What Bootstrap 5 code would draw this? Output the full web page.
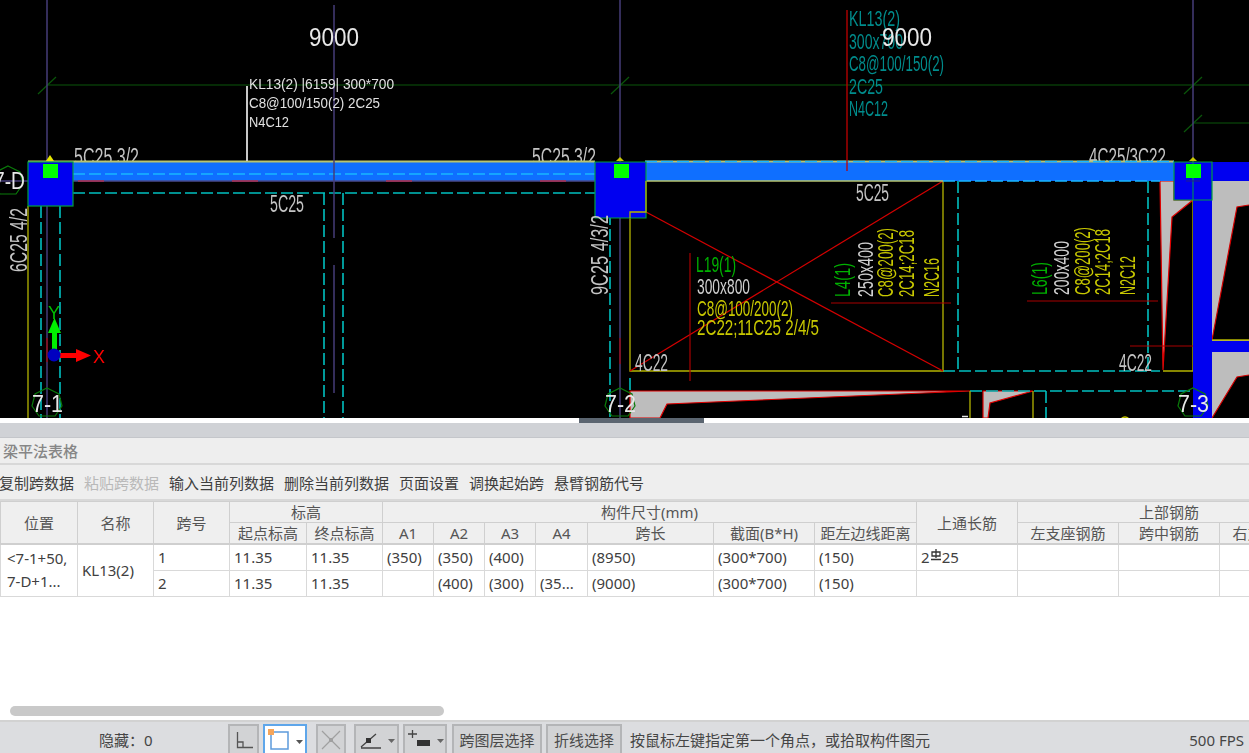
<!DOCTYPE html>
<html lang="zh-CN">
<head>
  <meta charset="UTF-8">
  <meta name="viewport" content="width=device-width, initial-scale=1.0">
  <title>梁平法表格</title>
  <link rel="stylesheet" href="https://cdn.jsdelivr.net/npm/bootstrap@5.3.0/dist/css/bootstrap.min.css">
  <style>
    html, body { height: 100%; }
    body {
      width: 1249px;
      height: 753px;
      overflow: hidden;
      background: #fff;
      color: #3f3f3f;
      font-family: "Noto Sans", "Noto Sans CJK SC", sans-serif;
      font-size: 15px;
    }
    /* drawing area */
    .cad-view { display: block; width: 1249px; height: 418px; background: #000; flex: none; filter: blur(0.4px); }
    .cad-view text { font-family: "Liberation Sans", sans-serif; }
    .cad-view line, .cad-view polyline { fill: none; }
    .grid-line { stroke: #463c78; stroke-width: 1.5; }
    .dim-line { stroke: #0a560a; stroke-width: 1.2; }
    .dash-teal { stroke: #00c0c0; stroke-width: 1.6; stroke-dasharray: 12 4; }
    .dash-sky { stroke: #19b8ff; stroke-width: 1.6; stroke-dasharray: 12 4; }
    .edge-yellow { stroke: #b4b400; stroke-width: 1.3; }
    .edge-red { stroke: #d40000; stroke-width: 1.2; }
    .leader-red { stroke: #a80000; stroke-width: 1.2; }
    .t-gray { fill: #c4c4c4; font-size: 23px; }
    .t-light { fill: #d0d0d0; font-size: 22px; }
    .t-white { fill: #e0e0e0; font-size: 14px; }
    .t-yellow { fill: #c8c800; font-size: 22px; }
    .t-green { fill: #00b000; font-size: 22px; }
    .t-teal { fill: #008c8c; font-size: 22px; }
    .t-num { fill: #e8e8e8; font-size: 25px; }
    .t-axis { fill: #e8e8e8; font-size: 23px; }
    .column-fill { fill: #0000f0; }
    .gray-fill { fill: #bdbdbd; stroke: #e00000; stroke-width: 1.2; }
    .hex { fill: none; stroke: #0a7a0a; stroke-width: 1.2; }

    /* splitter */
    .split-bar { height: 5px; background: #fff; flex: none; }
    .split-grip { width: 125px; height: 5px; margin-left: 579px; background: #5b6570; }
    .panel-head { height: 15px; background: #d0d2d6; border-bottom: 1px solid #c4c6ca; flex: none; }

    /* beam table panel */
    .panel-title {
      height: 27px;
      padding-left: 3px;
      background: #eee;
      border-bottom: 2px solid #d8d8d8;
      color: #868686;
      font-weight: 500;
      line-height: 26px;
      flex: none;
    }
    .tool-row {
      height: 36px;
      background: #eee;
      border-bottom: 2px solid #d8d8d8;
      gap: 10px;
      margin: 0;
      line-height: 36px;
      flex: none;
    }
    .tool-row span { white-space: nowrap; }
    .tool-off { color: #b9b9b9; }
    .grid-wrap { flex: 1 1 auto; overflow: hidden; position: relative; background: #fff; }
    .beam-grid {
      width: 1320px;
      max-width: none;
      table-layout: fixed;
      margin: 0;
      color: #3f3f3f;
      font-size: 15px;
      border-collapse: collapse;
    }
    .beam-grid th, .beam-grid td {
      padding: 0 4px;
      border: 1px solid #d9d9d9;
      white-space: nowrap;
      overflow: hidden;
      box-shadow: none;
      vertical-align: middle;
    }
    .beam-grid th {
      height: 21px;
      padding: 0;
      background: #efefef;
      font-weight: 400;
      text-align: center;
      color: #555;
      border-color: #cfcfcf;
      line-height: 20px;
    }
    .beam-grid td { height: 26px; line-height: 22px; background: #fff; color: #404040; }
    .beam-grid tbody { border-top: 2px solid #cfcfcf; }
    .beam-grid .pos-cell { white-space: normal; line-height: 23px; padding: 0 0 0 6px; }
    .rebar-sign { display: inline-block; width: 12px; height: 12px; vertical-align: 2px; }
    .grid-scroll {
      position: absolute;
      left: 10px;
      bottom: 4px;
      width: 434px;
      height: 10px;
      border-radius: 5px;
      background: #c9c9c9;
    }

    /* bottom status bar */
    .status-bar {
      height: 33px;
      background: #dcdde0;
      border-top: 2px solid #d2d2d2;
      padding-top: 2px;
      flex: none;
      color: #454545;
    }
    .hide-count { width: 228px; padding-left: 99px; line-height: 32px; flex: none; }
    .bar-btn {
      height: 29px;
      padding: 0;
      border: 2px solid #b4b5b7;
      border-bottom: 0;
      border-radius: 0;
      background: #d2d3d5;
      color: #4a4a4a;
      font-size: 15px;
      line-height: 30px;
      display: flex;
      align-items: center;
      justify-content: center;
      flex: none;
    }
    .bar-btn svg { display: block; }
    .bar-on { background: #fff; border-color: #5ea6ea; }
    .w-31 { width: 31px; margin-right: 4px; }
    .w-44 { width: 44px; margin-right: 9px; }
    .w-30 { width: 30px; margin-right: 8px; }
    .w-45 { width: 45px; margin-right: 4px; }
    .w-44b { width: 44px; margin-right: 5px; }
    .w-90 { width: 90px; margin-right: 4px; }
    .w-76 { width: 76px; margin-right: 8px; }
    .status-msg { line-height: 32px; white-space: nowrap; }
    .fps-box { line-height: 33px; padding-right: 5px; white-space: nowrap; }
  </style>
</head>
<body class="d-flex flex-column">

<!-- CAD drawing -->
<svg class="cad-view" viewBox="0 0 1249 418" xmlns="http://www.w3.org/2000/svg">
  <defs>
    <polygon id="bubble" class="hex" points="0,-15 12,-9 15,3 8,13 -8,13 -15,3 -12,-9"/>
  </defs>

  <!-- dimension lines -->
  <line class="dim-line" x1="47" y1="85" x2="1249" y2="85"/>
  <line class="dim-line" x1="1193" y1="123" x2="1249" y2="123"/>
  <line class="dim-line" x1="38" y1="94" x2="56" y2="77"/>
  <line class="dim-line" x1="611" y1="94" x2="629" y2="77"/>
  <line class="dim-line" x1="1184" y1="94" x2="1202" y2="77"/>
  <line class="dim-line" x1="1184" y1="132" x2="1202" y2="115"/>

  <!-- grey wedges -->
  <polygon class="gray-fill" points="630,391 970,391 667,404 660,418 630,418"/>
  <polygon class="gray-fill" points="983,391 1033,391 990,403 988,418 983,418"/>
  <polygon class="gray-fill" points="1160,181 1174,181 1174,200 1193,200 1172,217 1163,370"/>
  <rect x="1212" y="181" width="37" height="237" fill="#bdbdbd"/>
  <polygon points="1212,340 1237,207 1249,205 1249,340" fill="#000"/>
  <polyline class="edge-red" points="1212,340 1237,207 1249,205"/>
  <polygon points="1212,418 1237,377 1249,375 1249,418" fill="#000"/>
  <polyline class="edge-red" points="1212,418 1237,377 1249,375"/>

  <!-- grid axes, the columns are drawn over them -->
  <line class="grid-line" x1="47" y1="0" x2="47" y2="418"/>
  <line class="grid-line" x1="620" y1="0" x2="620" y2="418"/>
  <line class="grid-line" x1="1193" y1="0" x2="1193" y2="162"/>
  <line class="grid-line" x1="0" y1="181" x2="28" y2="181"/>

  <!-- dashed beam and column outlines -->
  <line class="dash-teal" x1="41" y1="206" x2="41" y2="418"/>
  <line class="dash-teal" x1="60" y1="206" x2="60" y2="418"/>
  <line class="dash-teal" x1="324" y1="193" x2="324" y2="418"/>
  <line class="dash-teal" x1="343" y1="193" x2="343" y2="418"/>
  <line class="dash-teal" x1="73" y1="193" x2="595" y2="193"/>
  <line class="dash-teal" x1="610" y1="213" x2="610" y2="418"/>
  <line class="dash-teal" x1="630" y1="378" x2="630" y2="392"/>
  <line class="dash-teal" x1="958" y1="181" x2="958" y2="371"/>
  <line class="dash-teal" x1="1148" y1="181" x2="1148" y2="371"/>
  <line class="dash-teal" x1="943" y1="371" x2="1160" y2="371"/>
  <line class="dash-teal" x1="970" y1="391" x2="1190" y2="391"/>
  <line class="dash-teal" x1="1046" y1="391" x2="1046" y2="418"/>

  <!-- yellow outlines -->
  <line class="edge-yellow" x1="28" y1="206" x2="28" y2="418"/>
  <polyline class="edge-yellow" points="646,212 630,212 630,371 943,371 943,181"/>
  <polyline class="edge-yellow" points="1163,371 1193,371 1193,200"/>
  <line class="edge-yellow" x1="970" y1="391" x2="970" y2="418"/>
  <line class="edge-yellow" x1="1033" y1="391" x2="1033" y2="418"/>
  <line class="edge-yellow" x1="1212" y1="340" x2="1249" y2="340"/>
  <circle cx="1125" cy="422" r="5" fill="none" stroke="#c8c800" stroke-width="1.300"/>
  <line x1="962" y1="416.500" x2="968" y2="416.500" stroke="#e8e8e8" stroke-width="1.500"/>

  <!-- red lines -->
  <line class="edge-red" x1="630" y1="371" x2="943" y2="181"/>
  <line class="edge-red" x1="646" y1="212" x2="943" y2="371"/>
  <line class="leader-red" x1="690" y1="253" x2="690" y2="381"/>
  <line class="leader-red" x1="831" y1="303" x2="951" y2="303"/>
  <line class="leader-red" x1="1027" y1="301" x2="1158" y2="301"/>
  <line class="leader-red" x1="1130" y1="346" x2="1193" y2="346"/>
  <line class="leader-red" x1="47" y1="338" x2="47" y2="362"/>
  <line class="leader-red" x1="620" y1="338" x2="620" y2="364"/>

  <!-- labels the beam covers at their foot -->
  <text class="t-gray" x="74" y="165" textLength="65" lengthAdjust="spacingAndGlyphs">5C25 3/2</text>
  <text class="t-gray" x="532" y="165" textLength="64" lengthAdjust="spacingAndGlyphs">5C25 3/2</text>
  <text class="t-gray" x="1089" y="165" textLength="77" lengthAdjust="spacingAndGlyphs">4C25/3C22</text>

  <!-- beam band -->
  <rect x="73" y="162" width="1101" height="19" fill="#0f6fff"/>
  <line x1="28" y1="161.500" x2="595" y2="161.500" stroke="#b8c46e" stroke-width="2"/>
  <line x1="73" y1="181" x2="595" y2="181" stroke="#4a4a8c" stroke-width="1.500"/>
  <line class="dash-sky" x1="73" y1="174" x2="595" y2="174"/>
  <line x1="645" y1="161.500" x2="1174" y2="161.500" stroke="#b8c46e" stroke-width="2"/>
  <line class="dash-sky" x1="645" y1="161.500" x2="1174" y2="161.500"/>
  <line x1="645" y1="181" x2="943" y2="181" stroke="#b8c46e" stroke-width="1.500"/>
  <line class="dash-sky" x1="943" y1="181" x2="1160" y2="181"/>
  <line x1="78" y1="181" x2="104" y2="181" stroke="#b03050" stroke-width="1.500"/>
  <line x1="232" y1="181" x2="258" y2="181" stroke="#b03050" stroke-width="1.500"/>
  <line x1="386" y1="181" x2="412" y2="181" stroke="#b03050" stroke-width="1.500"/>
  <line x1="540" y1="181" x2="566" y2="181" stroke="#b03050" stroke-width="1.500"/>
  <rect x="1212" y="162" width="37" height="19" fill="#0000f0"/>
  <rect x="1193" y="200" width="19" height="218" fill="#0000f0"/>
  <rect x="1212" y="341" width="37" height="11" fill="#0000f0"/>
  <line class="grid-line" x1="334" y1="5" x2="334" y2="238"/>
  <line class="grid-line" x1="334" y1="265" x2="334" y2="393"/>
  <line x1="847" y1="10" x2="847" y2="171" stroke="#c00000" stroke-width="1.300"/>
  <line x1="247" y1="86" x2="247" y2="161" stroke="#c8c8c8" stroke-width="2"/>

  <!-- columns -->
  <rect class="column-fill" x="28" y="162" width="45" height="44" stroke="#00a040" stroke-width="1.200"/>
  <polygon class="column-fill" points="595,162 646,162 646,218 595,218" stroke="#00a040" stroke-width="1.200"/>
  <polyline class="edge-yellow" points="630,218 630,212 646,212 646,181"/>
  <polygon class="column-fill" points="1174,162 1212,162 1212,200 1174,200" stroke="#00a040" stroke-width="1.200"/>
  <line x1="1193" y1="162" x2="1193" y2="200" stroke="#00a040" stroke-width="1"/>
  <line x1="1186" y1="181" x2="1200" y2="181" stroke="#202088" stroke-width="1"/>
  <rect x="43" y="164" width="15" height="14" fill="#00ff00"/>
  <rect x="614" y="164" width="15" height="14" fill="#00ff00"/>
  <rect x="1186" y="164" width="15" height="14" fill="#00ff00"/>
  <polygon points="50,155 46,161 54,161" fill="#e6e600"/>
  <polygon points="620,157 616,161 624,161" fill="#c8c800"/>
  <polygon points="1193,157 1189,161 1197,161" fill="#c8c800"/>

  <!-- bubbles -->
  <use href="#bubble" x="8" y="181"/>
  <use href="#bubble" x="47" y="403"/>
  <use href="#bubble" x="620" y="403"/>
  <use href="#bubble" x="1193" y="403"/>
  <text class="t-axis" x="-6" y="189" textLength="31" lengthAdjust="spacingAndGlyphs">7-D</text>
  <text class="t-axis" x="32" y="412" textLength="31" lengthAdjust="spacingAndGlyphs">7-1</text>
  <text class="t-axis" x="605" y="412" textLength="31" lengthAdjust="spacingAndGlyphs">7-2</text>
  <text class="t-axis" x="1178" y="412" textLength="31" lengthAdjust="spacingAndGlyphs">7-3</text>

  <!-- plain text notes -->
  <text class="t-num" x="309" y="46" textLength="50" lengthAdjust="spacingAndGlyphs">9000</text>
  <text class="t-white" x="249" y="89" textLength="145" lengthAdjust="spacingAndGlyphs">KL13(2) |6159| 300*700</text>
  <text class="t-white" x="249" y="108" textLength="131" lengthAdjust="spacingAndGlyphs">C8@100/150(2) 2C25</text>
  <text class="t-white" x="249" y="127" textLength="40" lengthAdjust="spacingAndGlyphs">N4C12</text>
  <text class="t-gray" x="270" y="212" textLength="34" lengthAdjust="spacingAndGlyphs">5C25</text>
  <text class="t-gray" x="856" y="201" textLength="33" lengthAdjust="spacingAndGlyphs">5C25</text>
  <text class="t-gray" x="635" y="371" textLength="33" lengthAdjust="spacingAndGlyphs">4C22</text>
  <text class="t-gray" x="1119" y="371" textLength="33" lengthAdjust="spacingAndGlyphs">4C22</text>
  <text class="t-teal" x="849" y="26" textLength="51" lengthAdjust="spacingAndGlyphs">KL13(2)</text>
  <text class="t-teal" x="849" y="49" textLength="54" lengthAdjust="spacingAndGlyphs">300x700</text>
  <text class="t-teal" x="849" y="71" textLength="95" lengthAdjust="spacingAndGlyphs">C8@100/150(2)</text>
  <text class="t-teal" x="849" y="94" textLength="34" lengthAdjust="spacingAndGlyphs">2C25</text>
  <text class="t-teal" x="849" y="116" textLength="39" lengthAdjust="spacingAndGlyphs">N4C12</text>
  <text class="t-num" x="882" y="46" textLength="50" lengthAdjust="spacingAndGlyphs">9000</text>
  <text class="t-green" x="696" y="272" textLength="40" lengthAdjust="spacingAndGlyphs">L19(1)</text>
  <text class="t-light" x="697" y="294" textLength="53" lengthAdjust="spacingAndGlyphs">300x800</text>
  <text class="t-yellow" x="697" y="316" textLength="96" lengthAdjust="spacingAndGlyphs">C8@100/200(2)</text>
  <text class="t-yellow" x="697" y="335" textLength="122" lengthAdjust="spacingAndGlyphs">2C22;11C25 2/4/5</text>

  <!-- rotated notes -->
  <text class="t-gray" transform="translate(27 272) rotate(-90)" textLength="64" lengthAdjust="spacingAndGlyphs">6C25 4/2</text>
  <text class="t-gray" transform="translate(608 295) rotate(-90)" textLength="80" lengthAdjust="spacingAndGlyphs">9C25 4/3/2</text>
  <text class="t-green" transform="translate(850 297) rotate(-90)" textLength="34" lengthAdjust="spacingAndGlyphs">L4(1)</text>
  <text class="t-light" transform="translate(873 297) rotate(-90)" textLength="55" lengthAdjust="spacingAndGlyphs">250x400</text>
  <text class="t-yellow" transform="translate(893 297) rotate(-90)" textLength="69" lengthAdjust="spacingAndGlyphs">C8@200(2)</text>
  <text class="t-yellow" transform="translate(914 297) rotate(-90)" textLength="67" lengthAdjust="spacingAndGlyphs">2C14;2C18</text>
  <text class="t-yellow" transform="translate(939 297) rotate(-90)" textLength="39" lengthAdjust="spacingAndGlyphs">N2C16</text>
  <text class="t-green" transform="translate(1047 295) rotate(-90)" textLength="33" lengthAdjust="spacingAndGlyphs">L6(1)</text>
  <text class="t-light" transform="translate(1069 295) rotate(-90)" textLength="54" lengthAdjust="spacingAndGlyphs">200x400</text>
  <text class="t-yellow" transform="translate(1090 295) rotate(-90)" textLength="68" lengthAdjust="spacingAndGlyphs">C8@200(2)</text>
  <text class="t-yellow" transform="translate(1110 295) rotate(-90)" textLength="66" lengthAdjust="spacingAndGlyphs">2C14;2C18</text>
  <text class="t-yellow" transform="translate(1135 295) rotate(-90)" textLength="39" lengthAdjust="spacingAndGlyphs">N2C12</text>

  <!-- UCS marker -->
  <rect x="52" y="331" width="5" height="20" fill="#00f000"/>
  <polygon points="54.500,318 48,333 61,333" fill="#00f000"/>
  <rect x="60" y="353" width="18" height="5" fill="#ff0000"/>
  <polygon points="91,355.500 76,349 76,362" fill="#ff0000"/>
  <circle cx="54" cy="355" r="6.500" fill="#0000c0"/>
  <text x="48" y="319" fill="#00c000" font-size="19" textLength="12" lengthAdjust="spacingAndGlyphs">Y</text>
  <text x="93" y="363" fill="#ff0000" font-size="19" textLength="12" lengthAdjust="spacingAndGlyphs">X</text>
</svg>

<div class="split-bar"><div class="split-grip"></div></div>
<div class="panel-head"></div>
<div class="panel-title">梁平法表格</div>
<div class="tool-row d-flex">
  <span style="margin-left:-1px">复制跨数据</span>
  <span class="tool-off">粘贴跨数据</span>
  <span>输入当前列数据</span>
  <span>删除当前列数据</span>
  <span>页面设置</span>
  <span>调换起始跨</span>
  <span>悬臂钢筋代号</span>
</div>

<div class="grid-wrap">
  <table class="table beam-grid">
    <colgroup>
      <col style="width:77px"><col style="width:76px"><col style="width:76px">
      <col style="width:77px"><col style="width:76px">
      <col style="width:51px"><col style="width:51px"><col style="width:51px"><col style="width:52px">
      <col style="width:126px"><col style="width:101px"><col style="width:102px">
      <col style="width:101px"><col style="width:101px"><col style="width:101px"><col style="width:101px">
    </colgroup>
    <thead>
      <tr>
        <th rowspan="2">位置</th>
        <th rowspan="2">名称</th>
        <th rowspan="2">跨号</th>
        <th colspan="2">标高</th>
        <th colspan="7">构件尺寸(mm)</th>
        <th rowspan="2">上通长筋</th>
        <th colspan="3">上部钢筋</th>
      </tr>
      <tr>
        <th>起点标高</th><th>终点标高</th>
        <th>A1</th><th>A2</th><th>A3</th><th>A4</th>
        <th>跨长</th><th>截面(B*H)</th><th>距左边线距离</th>
        <th>左支座钢筋</th><th>跨中钢筋</th><th>右支座钢筋</th>
      </tr>
    </thead>
    <tbody>
      <tr>
        <td rowspan="2" class="pos-cell">&lt;7-1+50,<br>7-D+1...</td>
        <td rowspan="2">KL13(2)</td>
        <td>1</td><td>11.35</td><td>11.35</td>
        <td>(350)</td><td>(350)</td><td>(400)</td><td></td>
        <td>(8950)</td><td>(300*700)</td><td>(150)</td>
        <td>2<svg class="rebar-sign" viewBox="0 0 12 12"><path d="M6 0V9M2 3H10V7H2ZM1 10.500H11" fill="none" stroke="#333" stroke-width="1.300"/></svg>25</td>
        <td></td><td></td><td></td>
      </tr>
      <tr>
        <td>2</td><td>11.35</td><td>11.35</td>
        <td></td><td>(400)</td><td>(300)</td><td>(35...</td>
        <td>(9000)</td><td>(300*700)</td><td>(150)</td>
        <td></td><td></td><td></td><td></td>
      </tr>
    </tbody>
  </table>
  <div class="grid-scroll"></div>
</div>

<div class="status-bar d-flex">
  <div class="hide-count">隐藏：0</div>
  <button type="button" class="btn bar-btn w-31">
    <svg width="20" height="20" viewBox="0 0 20 20"><path d="M3.500 2V17.500H19M3.500 12H9V17" fill="none" stroke="#555" stroke-width="1.300"/></svg>
  </button>
  <button type="button" class="btn bar-btn bar-on w-44">
    <svg width="40" height="24" viewBox="0 0 40 24"><rect x="6" y="4" width="17" height="17" fill="#fff" stroke="#5c9bdc" stroke-width="1.500"/><rect x="3" y="1" width="6" height="6" fill="#f5a55a"/><path d="M31 12h7l-3.500 4z" fill="#555"/></svg>
  </button>
  <button type="button" class="btn bar-btn w-30">
    <svg width="24" height="24" viewBox="0 0 24 24"><path d="M3 3L21 21M21 3L3 21" stroke="#a0a0a0" stroke-width="1.200"/><rect x="10" y="10" width="4" height="4" fill="#a0a0a0"/></svg>
  </button>
  <button type="button" class="btn bar-btn w-45">
    <svg width="40" height="22" viewBox="0 0 40 22"><path d="M4 18L19 5M4 19H24" stroke="#444" stroke-width="1.300"/><rect x="9" y="9" width="5" height="5" fill="#333"/><path d="M31 10h7l-3.500 4z" fill="#666"/></svg>
  </button>
  <button type="button" class="btn bar-btn w-44b">
    <svg width="40" height="22" viewBox="0 0 40 22"><path d="M3 5H12M7.500 1V9" stroke="#444" stroke-width="1.300"/><rect x="12" y="11" width="13" height="6" fill="#333"/><path d="M32 10h7l-3.500 4z" fill="#666"/></svg>
  </button>
  <button type="button" class="btn bar-btn w-90">跨图层选择</button>
  <button type="button" class="btn bar-btn w-76">折线选择</button>
  <div class="status-msg flex-grow-1">按鼠标左键指定第一个角点，或拾取构件图元</div>
  <div class="fps-box">500 FPS</div>
</div>

<script src="https://cdn.jsdelivr.net/npm/bootstrap@5.3.0/dist/js/bootstrap.bundle.min.js"></script>
</body>
</html>
